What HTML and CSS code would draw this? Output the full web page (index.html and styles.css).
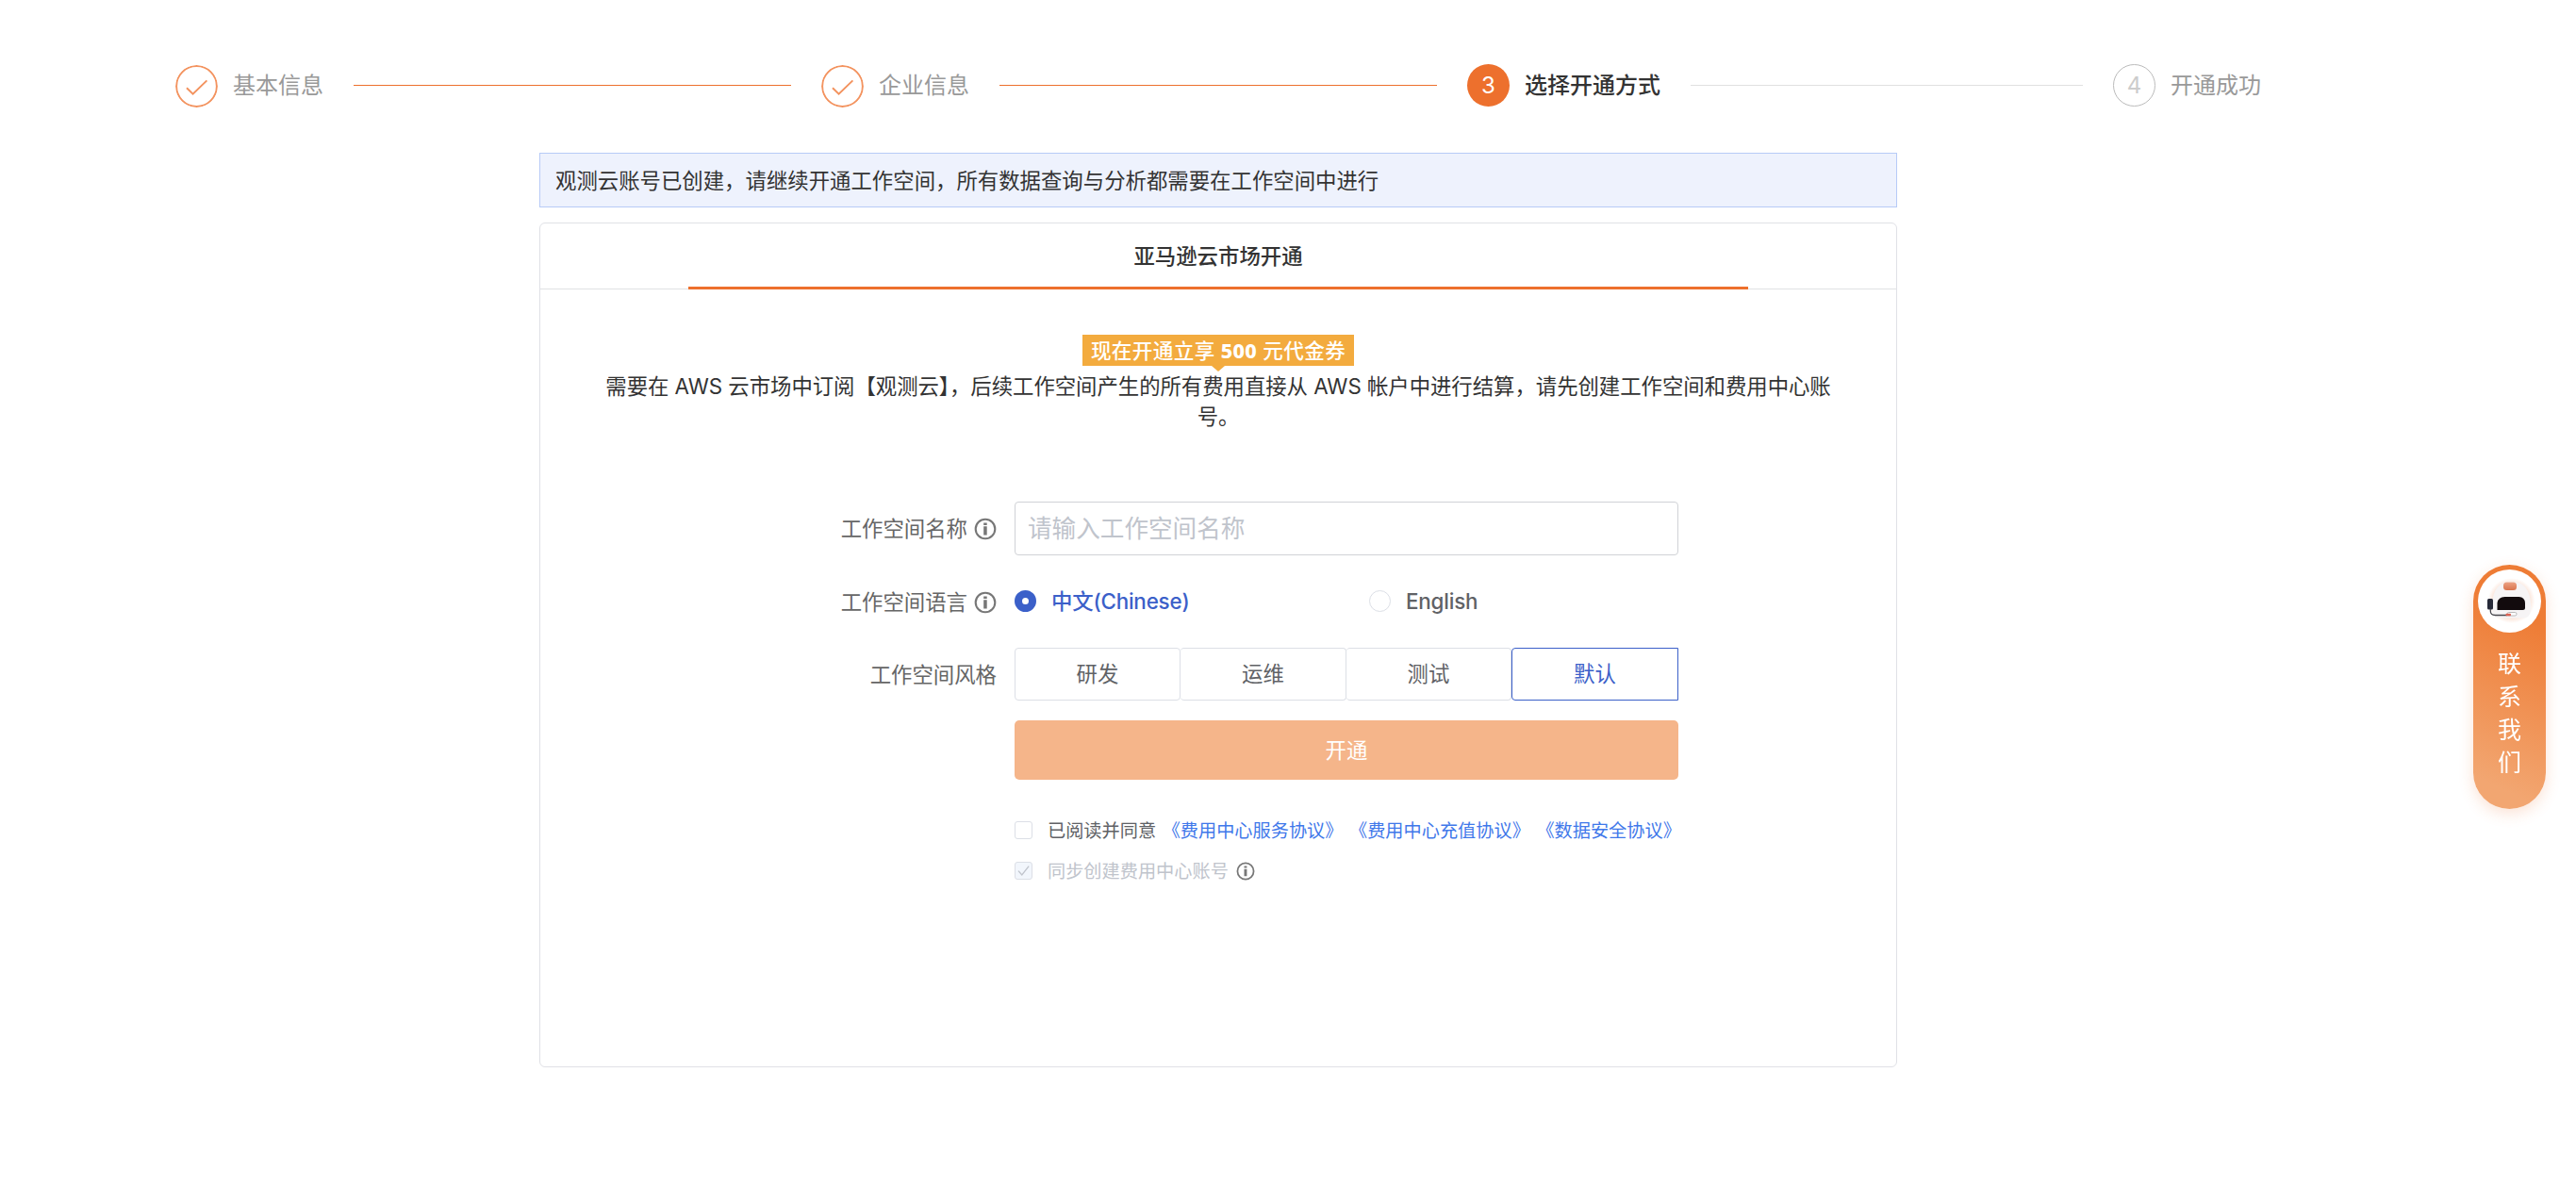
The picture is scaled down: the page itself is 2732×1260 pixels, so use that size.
FILE: index.html
```html
<!DOCTYPE html>
<html lang="zh-CN">
<head>
<meta charset="utf-8">
<title>选择开通方式</title>
<link rel="stylesheet" href="styles.css">
</head>
<body>
<svg class="defs" width="0" height="0">
  <symbol id="info" viewBox="0 0 24 24">
    <circle cx="12" cy="12" r="10.3" fill="none" stroke="currentColor" stroke-width="2.1"/>
    <path d="M10.2 5.4h3.5v2.5h-3.5zM10.2 9.3h3.5v9.1h-3.5z" fill="currentColor"/>
  </symbol>
  <symbol id="tick" viewBox="0 0 45 45">
    <circle cx="22.5" cy="22.5" r="21.4" fill="none" stroke="currentColor" stroke-width="2"/>
    <path d="M12 24.2l6.6 6.4L33.4 16.4" fill="none" stroke="currentColor" stroke-width="2"/>
  </symbol>
</svg>

<ol class="steps">
  <li class="step done"><svg class="mark"><use href="#tick"/></svg><span class="title">基本信息</span><i class="line"></i></li>
  <li class="step done"><svg class="mark"><use href="#tick"/></svg><span class="title">企业信息</span><i class="line"></i></li>
  <li class="step current"><span class="mark">3</span><span class="title">选择开通方式</span><i class="line"></i></li>
  <li class="step wait"><span class="mark">4</span><span class="title">开通成功</span></li>
</ol>

<main class="main">
  <div class="notice">观测云账号已创建，请继续开通工作空间，所有数据查询与分析都需要在工作空间中进行</div>
  <section class="card">
    <div class="tabs"><div class="tab">亚马逊云市场开通</div></div>
    <div class="intro">
      <span class="promo">现在开通立享 <b>500</b> 元代金券</span>
      <p class="desc">需要在 AWS 云市场中订阅【观测云】，后续工作空间产生的所有费用直接从 AWS 帐户中进行结算，请先创建工作空间和费用中心账<br>号。</p>
    </div>
    <form class="form">
      <div class="label name">工作空间名称<svg class="info"><use href="#info"/></svg></div>
      <input class="input" type="text" placeholder="请输入工作空间名称">
      <div class="label lang">工作空间语言<svg class="info"><use href="#info"/></svg></div>
      <div class="radios">
        <span class="radio on"><i class="dot"></i><span>中文(Chinese)</span></span>
        <span class="radio"><i class="dot"></i><span>English</span></span>
      </div>
      <div class="label style">工作空间风格</div>
      <div class="group"><span class="opt">研发</span><span class="opt">运维</span><span class="opt">测试</span><span class="opt on">默认</span></div>
      <button class="submit" type="button">开通</button>
      <div class="check agree"><i class="box"></i><span class="txt">已阅读并同意</span><a>《费用中心服务协议》</a><a>《费用中心充值协议》</a><a>《数据安全协议》</a></div>
      <div class="check sync"><svg class="box" viewBox="0 0 19 19"><path d="M3.400 9.600l4.200 4.800 8.200-10.400" fill="none" stroke="#c0c4cc" stroke-width="1.5"/></svg><span class="txt">同步创建费用中心账号</span><svg class="info"><use href="#info"/></svg></div>
    </form>
  </section>
</main>

<aside class="contact">
  <svg class="avatar" viewBox="0 0 67 67">
    <defs>
      <radialGradient id="glow"><stop offset=".75" stop-color="#fbe3d6"/><stop offset="1" stop-color="#fff"/></radialGradient>
      <linearGradient id="cap" x2="0" y2="1"><stop stop-color="#eda283"/><stop offset="1" stop-color="#d9734c"/></linearGradient>
    </defs>
    <circle cx="33.5" cy="33.5" r="33.5" fill="#fff"/>
    <ellipse cx="35.500" cy="33" rx="25" ry="24" fill="url(#glow)"/>
    <path d="M15 40c0-17 6-27 20.500-27S56 23 56 40c0 9-3 11.500-9 11.500H24c-6 0-9-3-9-11.500z" fill="#f6f4f5"/>
    <rect x="27" y="13.500" width="14" height="8.500" rx="3.500" fill="url(#cap)"/>
    <path d="M20.500 43v-7.500q1-6.500 8-6.500h15q6 0 6.500 6.500v5q0 2.500-2.500 2.500z" fill="#120b0d"/>
    <rect x="10" y="31" width="6" height="11.500" rx="1.500" fill="#272a38"/>
    <path d="M13.300 42v2q0 4.500 5 4.500h13" fill="none" stroke="#4a4a50" stroke-width="1.300"/>
    <rect x="31" y="45.500" width="10" height="3.500" rx="1.700" fill="#fff" stroke="#aaa" stroke-width=".8"/>
    <rect x="29.500" y="46.800" width="5.500" height="2.500" rx="1" fill="#dc6253"/>
  </svg>
  <span class="vertical">联<br>系<br>我<br>们</span>
</aside>
</body>
</html>
```
FILE: styles.css
```css
* { box-sizing: border-box; }
body {
  margin: 0;
  min-height: 1260px;
  background: #fff;
  color: #333;
  font: 22.4px/32px Inter, "Noto Sans CJK SC", sans-serif;
}
.defs { position: absolute; }
.steps {
  display: grid;
  grid-template-columns: 685px 685px 685px auto;
  grid-template-rows: 45px;
  width: 2300px;
  height: 45px;
  margin: 68px 0 49px 186px;
  padding: 0;
  list-style: none;
}
.step { display: flex; align-items: center; height: 45px; color: #999; font-size: 24px; }
.mark {
  flex: none;
  width: 45px;
  height: 45px;
  border-radius: 50%;
  line-height: 45px;
  text-align: center;
}
.title { margin-left: 16px; white-space: nowrap; }
.line { flex: 1; height: 1px; margin: 0 32px; background: #e0e0e0; }
.done .mark { margin-top: 2px; color: #f3935f; }
.done .line { background: #ed702d; }
.current .mark { background: #ed702d; color: #fff; }
.current .title { color: #333; font-weight: 500; }
.wait .mark { border: 1px solid #bbb; color: #ccc; line-height: 43px; }

.main { width: 1440px; margin-left: 572px; }
.notice {
  height: 58px;
  padding: 0 16px;
  border: 1px solid #b7cbf7;
  background: #eef2fd;
  line-height: 58px;
}
.card {
  height: 896px;
  margin-top: 16px;
  border: 1px solid #e0e1e6;
  border-radius: 6px;
}
.tabs { height: 70px; padding: 0 157px; border-bottom: 1px solid #e0e1e4; }
.tab {
  height: 70px;
  border-bottom: 3px solid #ed702d;
  font-weight: 500;
  line-height: 69px;
  text-align: center;
}
.intro { display: flex; flex-direction: column; align-items: center; padding-top: 48px; }
.promo {
  position: relative;
  width: 288px;
  height: 33px;
  background: #f3ab3e;
  color: #fff;
  font-size: 21.600px;
  font-weight: 500;
  letter-spacing: .35px;
  line-height: 33px;
  text-align: center;
  white-space: nowrap;
}
.promo b { font-family: "Noto Sans", sans-serif; font-weight: 800; }
.promo::after {
  content: "";
  position: absolute;
  top: 33px;
  left: 50%;
  margin-left: -7px;
  border: 7px solid transparent;
  border-top: 6px solid #f3ab3e;
  border-bottom: 0;
}
.desc { margin: 6px 0 0; letter-spacing: -.04px; text-align: center; white-space: nowrap; }
.form {
  display: grid;
  grid-template-columns: 484px 704px;
  grid-template-rows: 57px 98px 56px 63px auto auto;
  column-gap: 19px;
  margin-top: 74px;
  color: #606266;
}
.label { display: flex; align-items: center; justify-content: flex-end; color: #666; }
.lang, .style { padding-top: 2px; }
.info { flex: none; width: 24px; height: 24px; margin-left: 7px; color: #777; }
.input {
  width: 704px;
  height: 57px;
  padding: 0 13px;
  border: 1px solid #d0d2d6;
  border-radius: 4px;
  background: #fff;
  font: 25.600px Inter, "Noto Sans CJK SC", sans-serif;
}
.input::placeholder { color: #c0c4cc; opacity: 1; }
.radios { display: grid; grid-template-columns: 376px 1fr; align-items: center; padding-bottom: 1px; }
.radio { display: flex; align-items: center; gap: 16px; font-weight: 500; letter-spacing: -.2px; }
.dot { width: 23px; height: 23px; border: 1px solid #dcdfe6; border-radius: 50%; }
.radio.on { color: #3b60c9; }
.on .dot { border: 8px solid #3b60c9; }
.group { display: grid; grid-template-columns: 176px 176px 175px 177px; }
.opt { border: 1px solid #dcdfe6; border-left-width: 0; border-radius: 4px; line-height: 54px; text-align: center; }
.opt:first-child { border-left-width: 1px; }
.opt.on { border: 1px solid #3b60c9; border-radius: 4px 0 0 4px; color: #3b60c9; }
.submit {
  grid-column: 2;
  height: 63px;
  margin-top: 21px;
  padding: 0 0 4px;
  border: 0;
  border-radius: 5px;
  background: #f5b58a;
  color: #fff;
  font: 22.400px Inter, "Noto Sans CJK SC", sans-serif;
}
.check { grid-column: 2; display: flex; align-items: center; height: 43px; font-size: 19.200px; white-space: nowrap; }
.agree { margin-top: 53px; }
.box { flex: none; width: 19px; height: 19px; margin-right: 16px; border: 1px solid #dcdfe6; border-radius: 3px; }
.check a { margin-left: 6.500px; color: #3f78ea; }
.sync { color: #c0c4cc; }
.sync .box { background: #f2f6fc; }
.sync .info { width: 20px; height: 20px; margin-left: 8px; }

.contact {
  position: fixed;
  top: 599px;
  left: 2623px;
  display: flex;
  flex-direction: column;
  align-items: center;
  width: 77px;
  height: 259px;
  padding-top: 5px;
  border-radius: 39px;
  background: linear-gradient(205deg, #ee7c35 22%, #f2a671 88%);
  box-shadow: 0 5px 16px rgba(237, 112, 45, .2);
  color: #fff;
  font-size: 25px;
  line-height: 35px;
}
.avatar { width: 67px; height: 67px; }
.vertical { margin-top: 16px; text-align: center; }
```
